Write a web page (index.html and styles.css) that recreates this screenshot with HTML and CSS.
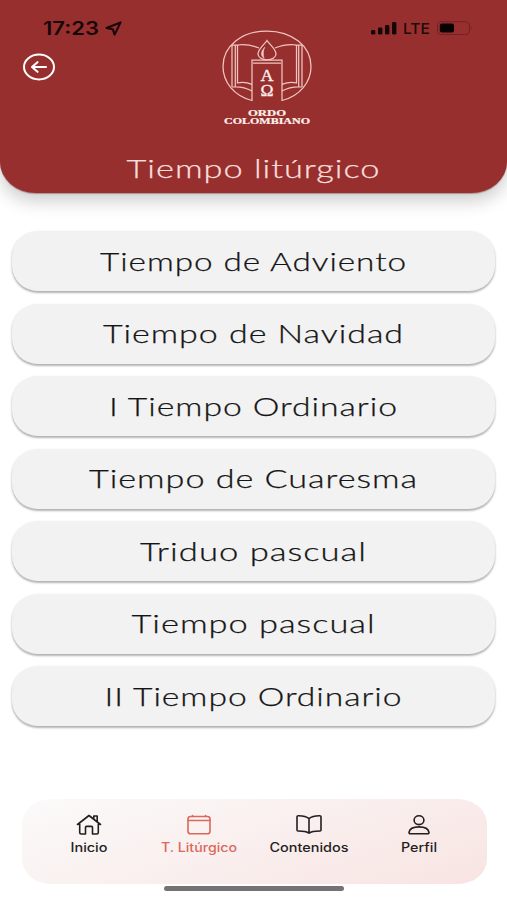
FILE: index.html
```html
<!DOCTYPE html>
<html lang="es">
<head>
<meta charset="utf-8">
<title>Tiempo litúrgico</title>
<link rel="stylesheet" href="styles.css">
</head>
<body>
<header class="header">
  <div class="status">
    <svg class="clock" width="84" height="20" viewBox="0 0 84 20">
      <text class="time" x="1" y="16" textLength="56" lengthAdjust="spacingAndGlyphs">17:23</text>
      <path d="M64.500 9 78.600 3.400 72.600 15.600 70.800 10.200Z" fill="none" stroke="#180708" stroke-width="2.100" stroke-linejoin="round"/>
    </svg>
    <svg class="signals" width="104" height="20" viewBox="0 0 104 20">
      <g fill="#160606"><rect x="1" y="11" width="4.400" height="4.600" rx="1.400"/><rect x="8" y="8.500" width="4.400" height="7.100" rx="1.400"/><rect x="15" y="6" width="4.400" height="9.600" rx="1.400"/><rect x="22" y="3" width="4.400" height="12.600" rx="1.400"/></g>
      <text class="network" x="33" y="15.300" textLength="27" lengthAdjust="spacingAndGlyphs">LTE</text>
      <rect x="67.500" y="2.700" width="32" height="12.800" rx="4" fill="none" stroke="#702225" stroke-width="1.100"/>
      <rect x="69.800" y="4.600" width="14.200" height="9" rx="2" fill="#080202"/>
      <path d="M101.300 7.200q1.800 1.700 0 3.600z" fill="#702225"/>
    </svg>
  </div>
  <div class="brand-row">
    <svg class="back" width="34" height="30" viewBox="0 0 34 30" fill="none" stroke="#fff" stroke-linecap="round" stroke-linejoin="round">
      <ellipse cx="17" cy="15" rx="15" ry="12.400" stroke-width="2"/>
      <path d="M24 15H10.300M15.500 10.200 10 15l5.500 4.800" stroke-width="2.100"/>
    </svg>
    <svg class="logo" width="100" height="104" viewBox="0 0 100 104">
      <g fill="none" stroke="#f0c6c1" stroke-width="1.250">
        <path d="M35 76.500C17 72 6 58 6 42.500 6 22 25 7 50 7s44 15 44 35.500c0 15.500-11 29.500-29 34"/>
        <path d="M35 77V36h30v41M36 39h28"/>
        <path d="M15 21V63M18.300 21V63M15 21h7M20.500 21V59q7-1.500 14.500 1.300M20.500 21q10-1.500 21.500 3M15 63q11-1 20 4"/>
        <path d="M85 21V63M81.700 21V63M85 21h-7M79.500 21V59q-7-1.500-14.500 1.300M79.500 21q-10-1.500-21.500 3M85 63q-11-1-20 4"/>
        <path d="M50 16.500C47 21 41 25 41 30c0 3 3.500 5.800 9 5.800s9-2.800 9-5.800C59 25 53 21 50 16.500Z" fill="#982f2f"/>
        <path d="M48 23C44 27 43 31 47 34.400 46 30 46 26 48 23Z" fill="#f3cfcb" stroke-width=".5"/>
      </g>
      <g class="greek"><text x="50" y="57" textLength="13" lengthAdjust="spacingAndGlyphs">A</text><text x="50" y="72" textLength="13" lengthAdjust="spacingAndGlyphs">Ω</text></g>
      <g class="wordmark"><text x="50" y="92.300" textLength="38" lengthAdjust="spacingAndGlyphs">ORDO</text><text x="50" y="99.500" textLength="86" lengthAdjust="spacingAndGlyphs">COLOMBIANO</text></g>
    </svg>
  </div>
  <svg class="title label" role="heading" aria-level="1"><text x="50%" y="28" textLength="254" lengthAdjust="spacingAndGlyphs">Tiempo litúrgico</text></svg>
</header>
<main class="list">
  <button class="item"><svg class="label"><text x="50%" y="28" textLength="307" lengthAdjust="spacingAndGlyphs">Tiempo de Adviento</text></svg></button>
  <button class="item"><svg class="label"><text x="50%" y="28" textLength="301" lengthAdjust="spacingAndGlyphs">Tiempo de Navidad</text></svg></button>
  <button class="item"><svg class="label"><text x="50%" y="28" textLength="289" lengthAdjust="spacingAndGlyphs">I Tiempo Ordinario</text></svg></button>
  <button class="item"><svg class="label"><text x="50%" y="28" textLength="329" lengthAdjust="spacingAndGlyphs">Tiempo de Cuaresma</text></svg></button>
  <button class="item"><svg class="label"><text x="50%" y="28" textLength="227" lengthAdjust="spacingAndGlyphs">Triduo pascual</text></svg></button>
  <button class="item"><svg class="label"><text x="50%" y="28" textLength="244" lengthAdjust="spacingAndGlyphs">Tiempo pascual</text></svg></button>
  <button class="item"><svg class="label"><text x="50%" y="28" textLength="298" lengthAdjust="spacingAndGlyphs">II Tiempo Ordinario</text></svg></button>
</main>
<nav class="tabs">
  <a class="tab">
    <svg class="icon" viewBox="0 0 28 22"><path d="M2.500 10.500 14 1.500 25.500 10.500M4.700 9v9.500q0 1.500 1.500 1.500h4.300V13.400q0-1 1-1h5q1 0 1 1v6.600h4.300q1.500 0 1.500-1.500V9M18.800 5V2h3.400v5.600"/></svg>
    <svg class="caption"><text x="50%" y="12" textLength="37" lengthAdjust="spacingAndGlyphs">Inicio</text></svg>
  </a>
  <a class="tab active">
    <svg class="icon" viewBox="0 0 28 22"><rect x="3" y="2.500" width="22" height="17.300" rx="2.600"/><path d="M3 6.500h22M7.500 1.500v1M20.500 1.500v1"/></svg>
    <svg class="caption"><text x="50%" y="12" textLength="76" lengthAdjust="spacingAndGlyphs">T. Litúrgico</text></svg>
  </a>
  <a class="tab">
    <svg class="icon" viewBox="0 0 28 22"><path d="M14 4.600C11.500 2.500 7.500 1.700 3 1.800Q2 1.800 2 2.700V16Q2 17 3 17c4.500 0 8.500.2 11 2.200 2.500-2 6.500-2.200 11-2.200q1 0 1-1V2.700q0-.9-1-.9c-4.500-.1-8.500.7-11 2.800ZM14 4.600v14.600"/></svg>
    <svg class="caption"><text x="50%" y="12" textLength="79" lengthAdjust="spacingAndGlyphs">Contenidos</text></svg>
  </a>
  <a class="tab">
    <svg class="icon" viewBox="0 0 28 22"><ellipse cx="14" cy="6.200" rx="4.900" ry="4.400"/><path d="M4 18.300c.6-3.800 5-5.400 10-5.400s9.400 1.600 10 5.400q.1 1.500-1.500 1.500h-17Q3.900 19.800 4 18.300Z"/></svg>
    <svg class="caption"><text x="50%" y="12" textLength="36" lengthAdjust="spacingAndGlyphs">Perfil</text></svg>
  </a>
</nav>
<div class="home-bar"></div>
</body>
</html>
```
FILE: styles.css
```css
* { box-sizing: border-box; }
body {
  margin: 0;
  height: 900px;
  overflow: hidden;
  background: #fff;
  display: flex;
  flex-direction: column;
}
svg { display: block; flex: none; }
.header {
  height: 193px;
  flex: none;
  background: #982f2f;
  border-radius: 0 0 36px 36px / 0 0 31px 31px;
  box-shadow: 0 1px 1px rgba(120, 60, 60, .45), 0 8px 18px rgba(0, 0, 0, .2);
}
.status {
  display: flex;
  justify-content: space-between;
  padding: 19px 33px 0 42px;
  height: 26px;
}
.time { font: 600 18px Inter, sans-serif; fill: #180708; }
.network { font: 500 15px Inter, sans-serif; fill: #210a0a; }
.brand-row {
  display: grid;
  grid-template-columns: 1fr 100px 1fr;
  height: 120px;
  padding-left: 27px;
}
.back { margin: 26px 0 0 -5px; }
.logo { margin-top: -2px; }
.greek text, .wordmark text {
  font-family: "Liberation Serif", serif;
  fill: #fff1ec;
  text-anchor: middle;
}
.greek text { font-size: 16px; stroke: #fff1ec; stroke-width: .3px; }
.wordmark text { font-size: 8.4px; font-weight: 700; stroke: #fff1ec; stroke-width: .2px; }
.label {
  width: 100%;
  height: 38px;
  overflow: visible;
}
.label text {
  font: 300 24.5px Lato, sans-serif;
  letter-spacing: .7px;
  fill: #151515;
  stroke: #151515;
  stroke-width: .25px;
  text-anchor: middle;
}
.title { margin-top: 4px; }
.title text { fill: #f9dfdc; stroke: #f9dfdc; }
.list {
  padding: 38px 12px 0;
  display: flex;
  flex-direction: column;
  gap: 12.5px;
}
.item {
  height: 60px;
  padding: 0;
  border: 0;
  border-radius: 26px / 25px;
  background: #f2f2f2;
  box-shadow: 0 2px 2px rgba(0, 0, 0, .24), 0 1px 3px rgba(0, 0, 0, .12);
  display: flex;
  align-items: flex-start;
}
.item .label { margin-top: 11.5px; }
.tabs {
  width: 465px;
  height: 85px;
  margin: auto auto 16px 22px;
  padding: 15px 13px 0 12px;
  display: grid;
  grid-template-columns: repeat(4, 1fr);
  border-radius: 29px / 25px;
  background: linear-gradient(160deg, #fbfafa 0%, #f9efee 50%, #f8e4e2 100%);
  flex: none;
}
.tab {
  display: flex;
  flex-direction: column;
  align-items: center;
  color: #241e1e;
}
.active { color: #dc675c; }
.icon {
  width: 28px;
  height: 22px;
  fill: none;
  stroke: currentColor;
  stroke-width: 1.6;
  stroke-linecap: round;
  stroke-linejoin: round;
}
.caption { width: 100%; height: 18px; margin-top: 4px; }
.caption text {
  font: 500 12.5px Inter, sans-serif;
  fill: currentColor;
  text-anchor: middle;
}
.home-bar {
  position: absolute;
  left: 164px;
  top: 886px;
  width: 180px;
  height: 5px;
  border-radius: 3px;
  background: #747272;
}
```
